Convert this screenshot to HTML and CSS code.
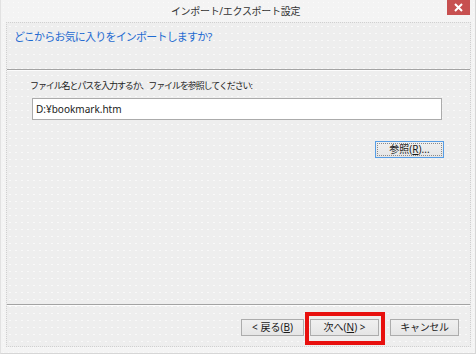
FILE: index.html
```html
<!DOCTYPE html>
<html lang="ja">
<head>
<meta charset="utf-8">
<title>インポート/エクスポート設定</title>
<link rel="stylesheet" href="styles.css">
</head>
<body>
<div class="window">
  <div class="titlebar">
    <span class="title">インポート/エクスポート設定</span>
    <span class="close"><svg width="9" height="9" viewBox="0 0 9 9"><path d="M1 1 L8 8 M8 1 L1 8" stroke="#fff" stroke-width="2"/></svg></span>
  </div>
  <div class="client">
    <div class="header">どこからお気に入りをインポートしますか?</div>
    <div class="sep"></div>
    <div class="body">
      <div class="label">ファイル名とパスを入力するか、ファイルを参照してください:</div>
      <div class="input">D:¥bookmark.htm</div>
      <div class="browse-row">
        <span class="btn btn-focus"><span class="focus-rect">参照(<u>R</u>)...</span></span>
      </div>
    </div>
    <div class="sep"></div>
    <div class="footer">
      <span class="btn btn-back">&lt;&nbsp;戻る(<u>B</u>)</span>
      <span class="btn btn-next highlight">次へ(<u>N</u>)&nbsp;&gt;</span>
      <span class="btn btn-cancel">キャンセル</span>
    </div>
  </div>
</div>
</body>
</html>
```

FILE: styles.css
```css
html, body {
  margin: 0;
  padding: 0;
  background: #f4f4f4;
}
body {
  font-family: "Noto Sans", "Noto Sans CJK JP", sans-serif;
  color: #1e1e1e;
}
.window {
  width: 476px;
  height: 354px;
  box-sizing: border-box;
  background-color: #f4f4f4;
  background-image: radial-gradient(circle, #fbfbfb 0.6px, transparent 0.9px);
  background-size: 5px 5px;
  border-left: 1px solid #e2e2e2;
  border-right: 1px solid #d6d6d6;
  border-bottom: 1px solid #d6d6d6;
  display: flex;
  flex-direction: column;
}
.titlebar {
  height: 22px;
  display: flex;
  align-items: flex-start;
  padding-right: 5px;
}
.title {
  flex: 1;
  text-align: center;
  padding-left: 23px;
  font-size: 10px;
  line-height: 22px;
  color: #333;
  letter-spacing: -0.3px;
}
.close {
  flex: none;
  width: 23px;
  height: 15px;
  background: #c75050;
  display: flex;
  align-items: center;
  justify-content: center;
}
.client {
  margin-left: 5px;
  margin-right: 4px;
  height: 325px;
  box-sizing: border-box;
  border: 1px dotted #d0d0d0;
  background-color: #eeeeee;
  background-image: radial-gradient(circle, #f9f9f9 0.6px, transparent 0.9px);
  background-size: 6px 7px;
  display: flex;
  flex-direction: column;
}
.header {
  height: 46px;
  box-sizing: border-box;
  padding: 7px 0 0 7px;
  font-size: 11px;
  line-height: 14px;
  color: #1f6bd1;
  letter-spacing: -0.8px;
}
.sep {
  height: 1px;
  background: #a3a3a3;
  border-bottom: 1px solid #fcfcfc;
}
.body {
  flex: 1;
  padding: 9px 0 0 25px;
  display: flex;
  flex-direction: column;
}
.label {
  font-size: 9px;
  line-height: 12px;
  letter-spacing: -1.1px;
  margin-left: -2px;
  color: #222;
}
.input {
  margin-top: 6px;
  width: 410px;
  height: 22px;
  box-sizing: border-box;
  border: 1px solid #ababab;
  background: #fff;
  font-size: 10px;
  line-height: 20px;
  padding-left: 3px;
  color: #1a1a1a;
}
.browse-row {
  margin-top: 21px;
  width: 412px;
  display: flex;
  justify-content: flex-end;
}
.btn {
  height: 17px;
  width: 69px;
  box-sizing: border-box;
  border: 1px solid #acacac;
  background: linear-gradient(#f0f0f0, #e5e5e5);
  font-size: 10px;
  line-height: 15px;
  text-align: center;
  color: #1a1a1a;
  display: inline-block;
  letter-spacing: 0;
  white-space: nowrap;
}
.btn u {
  text-decoration-thickness: 1px;
  text-underline-offset: 1px;
}
.btn-focus {
  border-color: #569de5;
  padding: 1px;
}
.focus-rect {
  display: block;
  height: 13px;
  line-height: 13px;
  outline: 1px dotted #8a8a8a;
  outline-offset: -1px;
}
.footer {
  height: 40px;
  box-sizing: border-box;
  padding: 13px 11px 0 0;
  display: flex;
  justify-content: flex-end;
  align-items: flex-start;
}
.btn-back {
  width: 63px;
}
.btn-next {
  margin-left: 6px;
}
.btn-cancel {
  margin-left: 11px;
  letter-spacing: -0.3px;
}
.highlight {
  position: relative;
}
.highlight::after {
  content: "";
  position: absolute;
  left: -6px;
  right: -7px;
  top: -8px;
  bottom: -10px;
  border: 4px solid #e8100e;
}
```
